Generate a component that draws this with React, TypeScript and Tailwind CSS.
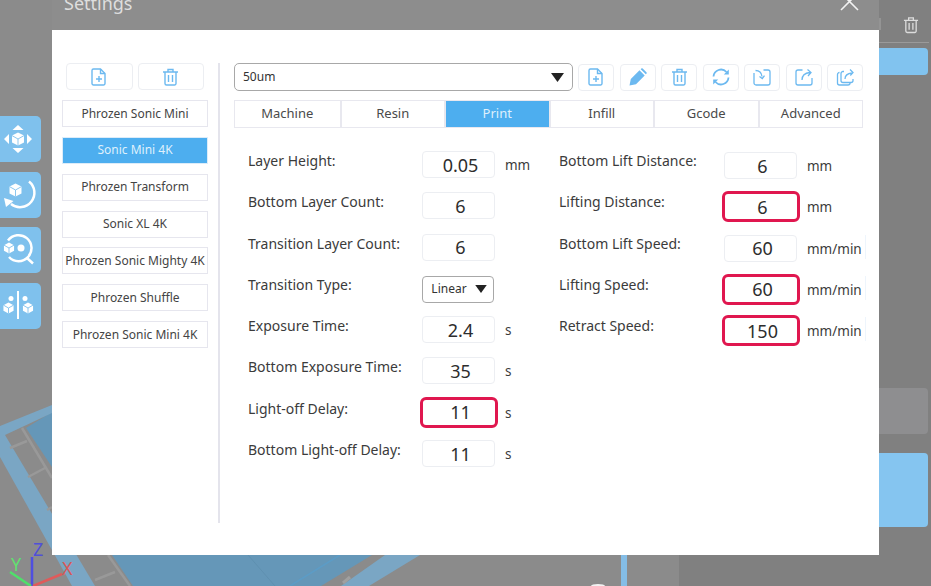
import React from "react";

const font = { fontFamily: '"Noto Sans", sans-serif' };
const icon = "#6cb9f0";
const tile = "#7fc1ed";

function FileAdd() {
  return (
    <svg width="16" height="18" viewBox="0 0 16 18" fill="none" stroke={icon} strokeWidth="1.4">
      <path d="M2.500 1h7l4.500 4.500v10a1.500 1.500 0 0 1-1.500 1.500h-10a1.500 1.500 0 0 1-1.500-1.500v-13a1.500 1.500 0 0 1 1.500-1.500z" />
      <path d="M9.500 1v4.500h4.500M8 8v6M5 11h6" />
    </svg>
  );
}
function Trash() {
  return (
    <svg width="17" height="18" viewBox="0 0 17 18" fill="none" stroke={icon} strokeWidth="1.4">
      <path d="M1 4h15M6 4V1.500h5V4M3 4v11.500a1.500 1.500 0 0 0 1.500 1.500h8a1.500 1.500 0 0 0 1.500-1.500V4M6.500 7v7M10.500 7v7" />
    </svg>
  );
}
function Pencil() {
  return (
    <svg width="18" height="18" viewBox="0 0 18 18" fill={icon}>
      <path d="M0.500 17.500l1.300-6.500L10.500 2.300l5.200 5.200L7 16.200zM11.700 1.200l.6-.6a1 1 0 0 1 1.400 0l3.700 3.700a1 1 0 0 1 0 1.400l-.6.6z" />
    </svg>
  );
}
function Sync() {
  return (
    <svg width="18" height="18" viewBox="0 0 18 18" fill="none" stroke={icon} strokeWidth="1.8">
      <path d="M1.500 8.500a7.500 7.500 0 0 1 13-4.500M16.500 9.500a7.500 7.500 0 0 1-13 4.500" />
      <path d="M16.800 1.500v5h-5zM1.200 16.500v-5h5z" fill={icon} stroke="none" />
    </svg>
  );
}
function ImportBox() {
  return (
    <svg width="18" height="18" viewBox="0 0 18 18" fill="none" stroke={icon} strokeWidth="1.3">
      <path d="M10.500 2H15a2 2 0 0 1 2 2v11a2 2 0 0 1-2 2H3a2 2 0 0 1-2-2V5" />
      <path d="M2.500 2.500c3.500 0 6 2 6.500 6M6.500 8.500l2.800 2 2.200-2.800" />
    </svg>
  );
}
function ExportBox() {
  return (
    <svg width="18" height="18" viewBox="0 0 18 18" fill="none" stroke={icon} strokeWidth="1.3">
      <path d="M7.500 2H3a2 2 0 0 0-2 2v11a2 2 0 0 0 2 2h12a2 2 0 0 0 2-2V10" />
      <path d="M7 12c0-4 3-7 8-7.500M12.500 1.500l3.500 3-3 3.500" />
    </svg>
  );
}
function ExportAll() {
  return (
    <svg width="19" height="18" viewBox="0 0 19 18" fill="none" stroke={icon} strokeWidth="1.3">
      <path d="M8 3.500H7a2 2 0 0 0-2 2v7a2 2 0 0 0 2 2h8a2 2 0 0 0 2-2V11" />
      <path d="M3.500 4.500A2 2 0 0 0 1.500 6.500v8.500a2 2 0 0 0 2 2h8.500a2 2 0 0 0 2-2" />
      <path d="M9 11c0-3 2.500-5.500 7-6M14 1.500l3 3-2.700 3" />
    </svg>
  );
}

function Cube({ cx, cy, r }: { cx: number; cy: number; r: number }) {
  const w = r * 0.92;
  const h = r * 0.52;
  return (
    <g>
      <path
        d={`M${cx} ${cy - r}L${cx + w} ${cy - h}V${cy + h}L${cx} ${cy + r}L${cx - w} ${cy + h}V${cy - h}z`}
        fill="#fff"
      />
      <path
        d={`M${cx - w} ${cy - h}L${cx} ${cy}L${cx + w} ${cy - h}M${cx} ${cy}V${cy + r}`}
        stroke={tile}
        strokeWidth="0.9"
        fill="none"
      />
    </g>
  );
}
function Move() {
  return (
    <svg width="41" height="46" viewBox="0 0 41 46" fill="#fff">
      <path d="M18 9l5.500 5h-11zM18 37l-5.500-5h11zM4 23l5-5v10zM32 23l-5 5V18z" />
      <Cube cx={18} cy={23} r={6.500} />
    </svg>
  );
}
function Rotate() {
  return (
    <svg width="41" height="46" viewBox="0 0 41 46">
      <path d="M29 9.500A12.500 12.500 0 0 1 11 32" fill="none" stroke="#fff" strokeWidth="2.5" />
      <path d="M4 26l9.500 3-7.500 6z" fill="#fff" />
      <Cube cx={15.500} cy={18} r={6.500} />
    </svg>
  );
}
function Scale() {
  return (
    <svg width="41" height="46" viewBox="0 0 41 46">
      <path d="M8 13.500A13 13 0 1 1 9 30M27 31l6 5.500" fill="none" stroke="#fff" strokeWidth="2.5" />
      <Cube cx={9} cy={21} r={5.500} />
      <circle cx="21" cy="21" r="3.500" fill="#fff" />
    </svg>
  );
}
function Mirror() {
  return (
    <svg width="41" height="46" viewBox="0 0 41 46">
      <rect x="17" y="8" width="2" height="28" fill="#fff" />
      <circle cx="11" cy="15.500" r="2.500" fill="#fff" />
      <circle cx="25" cy="15.500" r="2.500" fill="#fff" />
      <Cube cx={8.500} cy={25} r={5.500} />
      <Cube cx={28} cy={25} r={5.500} />
    </svg>
  );
}

function Field({
  label,
  value,
  unit,
  red,
  right,
}: {
  label: string;
  value: string;
  unit: string;
  red?: boolean;
  right?: boolean;
}) {
  return (
    <div className="flex h-[41.3px] items-start">
      <div
        className={
          right
            ? "-mt-px w-[165px] text-[14px] leading-[20px] text-[#3b3b3b]"
            : "w-[174px] text-[14px] leading-[20px] text-[#3b3b3b]"
        }
      >
        {label}
      </div>
      <div
        className={
          red
            ? "-ml-[2px] -mr-[3px] -mt-[2px] flex h-[31px] w-[78px] items-center justify-center rounded-[6px] border-[3px] border-[#e0174f] bg-white pl-[3px] pt-px text-[18px] text-[#2d2d2d]"
            : "flex h-[27px] w-[73px] items-center justify-center rounded-[4px] border border-[#eceef2] bg-white pl-[4px] pt-px text-[18px] text-[#2d2d2d]"
        }
      >
        {value}
      </div>
      <div
        className={
          unit === "mm/min"
            ? "ml-[10px] border-r border-[#eef5fc] pr-[3px] pt-[4px] text-[13.5px] leading-[20px] text-[#3b3b3b]"
            : "ml-[10px] pt-[4px] text-[13.5px] leading-[20px] text-[#3b3b3b]"
        }
      >
        {unit}
      </div>
    </div>
  );
}

export default function App() {
  const printers = [
    "Phrozen Sonic Mini",
    "Sonic Mini 4K",
    "Phrozen Transform",
    "Sonic XL 4K",
    "Phrozen Sonic Mighty 4K",
    "Phrozen Shuffle",
    "Phrozen Sonic Mini 4K",
  ];
  const tabs = ["Machine", "Resin", "Print", "Infill", "Gcode", "Advanced"];
  const actions = [<FileAdd />, <Pencil />, <Trash />, <Sync />, <ImportBox />, <ExportBox />, <ExportAll />];

  return (
    <div className="relative h-[586px] w-[931px] overflow-hidden bg-[#808080]" style={font}>
      {/* 3D canvas */}
      <svg className="absolute inset-0" width="931" height="586" viewBox="0 0 931 586">
        <rect x="0" y="0" width="679" height="586" fill="#8b8b8b" />
        <path d="M112 555H372L321 586H133z" fill="#6597b8" />
        <path d="M248 555L275 586" stroke="#5f90b0" strokeWidth="1" fill="none" />
        <path d="M340 555L290 586" stroke="#5c9cc6" strokeWidth="1.5" fill="none" />
        <path d="M385 555H420L369 586H341z" fill="#7aa6c4" />
        <path d="M343 583L350 577" stroke="#a0a0a0" strokeWidth="3" />
        <path d="M26 428L52 412V467z" fill="#6597b8" />
        <path d="M0 426L52 405V413L5 435 0 437z" fill="#7aa6c4" />
        <path d="M0 435L5 435 95 586H72L0 457z" fill="#7aa6c4" />
        <path d="M22 428L52 478M10 448L27 441M28 477L45 468M47 510L52 507" stroke="#999" strokeWidth="2.5" fill="none" />
        <path d="M108 555L130 586M95 580L115 572" stroke="#999" strokeWidth="2.5" fill="none" />
        <path d="M621 555h6v31h-6z" fill="#84bde6" />
        <path d="M591 586a7 2 0 0 1 14 0z" fill="#f2f2f2" />
        <path d="M880 18v12" stroke="#a8a8a8" strokeWidth="1" />
      </svg>

      {/* left toolbar */}
      <div className="absolute left-0 top-[116px] flex w-[41px] flex-col gap-[9.5px]">
        {[<Move />, <Rotate />, <Scale />, <Mirror />].map((ic, i) => (
          <div key={i} className="h-[46px] rounded-r-[5px] bg-[#7fc1ed]">
            {ic}
          </div>
        ))}
      </div>

      {/* axis gizmo */}
      <svg className="absolute left-[5px] top-[538px]" width="75" height="48" viewBox="0 0 75 48">
        <path d="M27 48V19" stroke="#4f4fe0" strokeWidth="2.5" />
        <path d="M26 48L5 34" stroke="#4fe06a" strokeWidth="2.5" />
        <path d="M28 48L57 36" stroke="#e05a5a" strokeWidth="2.5" />
      </svg>
      <div className="absolute left-[33px] top-[539px] text-[18px] leading-[20px] text-[#5050d8]">Z</div>
      <div className="absolute left-[11px] top-[554px] text-[18px] leading-[20px] text-[#60e070]">Y</div>
      <div className="absolute left-[62px] top-[558px] text-[18px] leading-[20px] text-[#d85858]">X</div>

      {/* right sidebar behind dialog */}
      <div className="absolute left-[879px] top-0 flex h-[586px] w-[52px] flex-col">
        <div className="mr-[2px] flex h-[43px] shrink-0 items-center justify-center border-b border-[#9a9a9a] pl-[14px] pt-[8px]">
          <svg width="16" height="18" viewBox="0 0 17 18" fill="none" stroke="#dcdcdc" strokeWidth="1.4">
            <path d="M1 4h15M6 4V1.500h5V4M3 4v11.500a1.500 1.500 0 0 0 1.500 1.500h8a1.500 1.500 0 0 0 1.500-1.500V4M6.500 7v7M10.500 7v7" />
          </svg>
        </div>
        <div className="mt-[5px] h-[27px] w-[49px] shrink-0 rounded-r-[4px] bg-[#81c3ef]" />
        <div className="mt-[313px] h-[46px] w-[49px] shrink-0 rounded-r-[4px] bg-[#8e8e90]" />
        <div className="mt-[19px] h-[74px] w-[49px] shrink-0 rounded-r-[4px] bg-[#85c5f0]" />
      </div>

      {/* header title */}
      <div className="absolute left-[52px] top-0 flex h-[30px] w-[827px] items-end justify-between bg-[#8d8d8d]">
        <div className="mb-[16px] ml-[12px] text-[18px] leading-[22px] text-[#dedede]">Settings</div>
        <svg className="mb-[19px] mr-[20px]" width="19" height="19" viewBox="0 0 19 19" stroke="#f2f2f2" strokeWidth="1.6">
          <path d="M1 1l17 17M18 1L1 18" />
        </svg>
      </div>

      {/* dialog */}
      <div className="absolute left-[52px] top-[30px] flex h-[525px] w-[827px] bg-white pt-[33px]">
        <div className="h-[460px] w-[168px] shrink-0 border-r-[2px] border-[#e4e4ec] pl-[10px]">
          <div className="flex gap-[5px] pl-[4px]">
            {[<FileAdd />, <Trash />].map((ic, i) => (
              <div key={i} className="flex h-[27px] w-[66.5px] items-center justify-center rounded-[4px] border border-[#eceef2]">
                {ic}
              </div>
            ))}
          </div>
          <div className="mt-[10px] flex w-[146px] flex-col gap-[9.85px]">
            {printers.map((p) => (
              <div
                key={p}
                className={
                  p === "Sonic Mini 4K"
                    ? "flex h-[27px] items-center justify-center border border-[#dcecf9] bg-[#4daeef] text-[12px] whitespace-nowrap text-[#dff0fc]"
                    : "flex h-[27px] items-center justify-center border border-[#e6e6ee] text-[12px] whitespace-nowrap text-[#444]"
                }
              >
                {p}
              </div>
            ))}
          </div>
        </div>

        <div className="ml-[14px] w-[629px] shrink-0">
          <div className="flex items-center">
            <div className="flex h-[28px] w-[340px] items-center justify-between rounded-[5px] border border-[#a8a8a8] px-[8px] text-[12px] text-[#333]">
              <span>50um</span>
              <svg width="13" height="9" viewBox="0 0 13 9" fill="#222">
                <path d="M0 0h13L6.500 9z" />
              </svg>
            </div>
            <div className="ml-[5px] flex gap-[5.5px]">
              {actions.map((ic, i) => (
                <div key={i} className="flex h-[27px] w-[36px] items-center justify-center rounded-[4px] border border-[#eceef2]">
                  {ic}
                </div>
              ))}
            </div>
          </div>

          <div className="mt-[9px] grid h-[28px] grid-cols-6 border border-[#e8e8ef]">
            {tabs.map((t) => (
              <div
                key={t}
                className={
                  t === "Print"
                    ? "flex items-center justify-center border-l-[2px] border-[#e8e8ef] bg-[#4daeef] text-[13px] text-[#dff0fc]"
                    : "flex items-center justify-center border-l-[2px] border-[#e8e8ef] text-[13px] text-[#4a4a4a] first:border-l-0"
                }
              >
                {t}
              </div>
            ))}
          </div>

          <div className="mt-[23px] flex">
            <div className="ml-[14px] w-[311px] shrink-0">
              <Field label="Layer Height:" value="0.05" unit="mm" />
              <Field label="Bottom Layer Count:" value="6" unit="" />
              <Field label="Transition Layer Count:" value="6" unit="" />
              <div className="flex h-[41.3px] items-start">
                <div className="w-[174px] text-[14px] leading-[20px] text-[#3b3b3b]">Transition Type:</div>
                <div className="mt-px flex h-[27px] w-[72px] items-center justify-center gap-[8px] rounded-[4px] border border-[#a8a8a8] pl-[2px] text-[12px] text-[#333]">
                  <span>Linear</span>
                  <svg width="12" height="8" viewBox="0 0 13 9" fill="#222">
                    <path d="M0 0h13L6.500 9z" />
                  </svg>
                </div>
              </div>
              <Field label="Exposure Time:" value="2.4" unit="s" />
              <Field label="Bottom Exposure Time:" value="35" unit="s" />
              <Field label="Light-off Delay:" value="11" unit="s" red />
              <Field label="Bottom Light-off Delay:" value="11" unit="s" />
            </div>
            <div className="mt-px flex-1">
              <Field label="Bottom Lift Distance:" value="6" unit="mm" right />
              <Field label="Lifting Distance:" value="6" unit="mm" red right />
              <Field label="Bottom Lift Speed:" value="60" unit="mm/min" right />
              <Field label="Lifting Speed:" value="60" unit="mm/min" red right />
              <Field label="Retract Speed:" value="150" unit="mm/min" red right />
            </div>
          </div>
        </div>
      </div>
    </div>
  );
}
